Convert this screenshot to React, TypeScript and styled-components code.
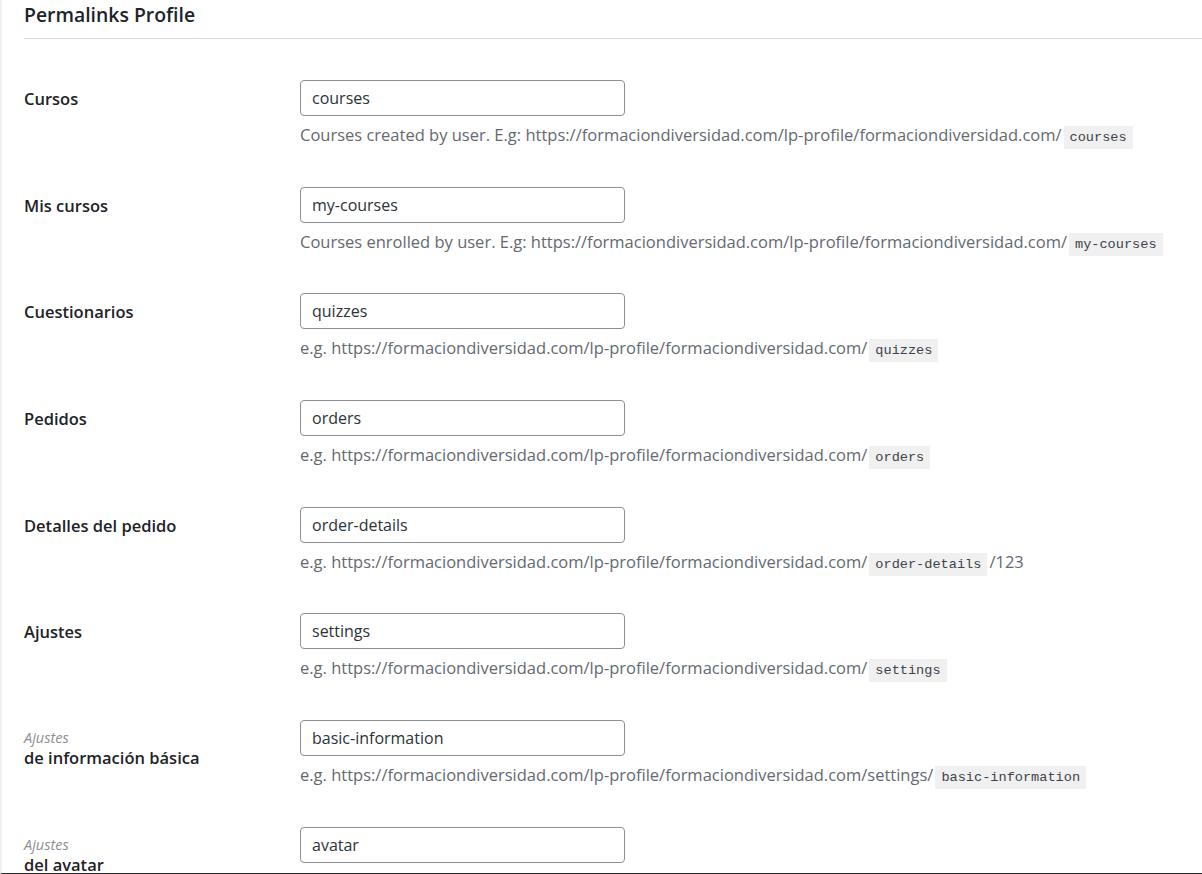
import React from "react";
import styled, { createGlobalStyle } from "styled-components";

const GlobalStyle = createGlobalStyle`
  html, body {
    margin: 0;
    padding: 0;
    background: #ffffff;
  }
  body {
    font-family: "Open Sans", "Noto Sans", Arial, sans-serif;
    color: #1d2327;
  }
`;

const Frame = styled.div`
  height: 874px;
  box-sizing: border-box;
  overflow: hidden;
  border-left: 2px solid #f0f0f1;
  border-bottom: 1px solid #2b2b2b;
  padding-left: 22px;
`;

const Title = styled.h2`
  margin: 0;
  padding: 2px 0 10px;
  font-size: 19.4px;
  line-height: 26px;
  font-weight: 600;
  color: #1d2327;
  border-bottom: 1px solid #dcdcde;
`;

const Rows = styled.div`
  padding-top: 21px;
`;

const Row = styled.div`
  display: grid;
  grid-template-columns: 276px 1fr;
  padding: 20px 0 20.7px;
`;

const Label = styled.div`
  padding-top: 8px;
  font-size: 16.5px;
  line-height: 22px;
  font-weight: 600;
  color: #1d2327;
`;

const LabelHint = styled.span`
  display: block;
  font-size: 14.5px;
  line-height: 19px;
  font-style: italic;
  font-weight: 400;
  color: #8c8f94;
`;

const Field = styled.div`
  display: flex;
  flex-direction: column;
  align-items: flex-start;
`;

const TextInput = styled.input`
  box-sizing: border-box;
  width: 325px;
  height: 36px;
  margin: 0;
  padding: 0 11px;
  border: 1px solid #8c8f94;
  border-radius: 4px;
  background: #ffffff;
  font-family: inherit;
  font-size: 16px;
  color: #2c3338;
  outline: none;
`;

const Description = styled.p`
  margin: 8px 0 0;
  height: 22px;
  font-size: 16.5px;
  line-height: 22px;
  color: #646970;
  white-space: nowrap;
`;

const Slug = styled.code`
  margin: 0 2px;
  padding: 4px 6px;
  background: #f0f0f1;
  font-family: "Liberation Mono", "DejaVu Sans Mono", monospace;
  font-size: 13.6px;
  line-height: 13px;
  color: #3c434a;
`;

type Permalink = {
  label: string;
  hint?: string;
  value: string;
  prefix: string;
  suffix?: string;
};

const SITE = "https://formaciondiversidad.com/lp-profile/formaciondiversidad.com/";

const permalinks: Permalink[] = [
  { label: "Cursos", value: "courses", prefix: `Courses created by user. E.g: ${SITE}` },
  { label: "Mis cursos", value: "my-courses", prefix: `Courses enrolled by user. E.g: ${SITE}` },
  { label: "Cuestionarios", value: "quizzes", prefix: `e.g. ${SITE}` },
  { label: "Pedidos", value: "orders", prefix: `e.g. ${SITE}` },
  { label: "Detalles del pedido", value: "order-details", prefix: `e.g. ${SITE}`, suffix: "/123" },
  { label: "Ajustes", value: "settings", prefix: `e.g. ${SITE}` },
  { label: "de información básica", hint: "Ajustes", value: "basic-information", prefix: `e.g. ${SITE}settings/` },
  { label: "del avatar", hint: "Ajustes", value: "avatar", prefix: `e.g. ${SITE}settings/` },
];

export default function App() {
  return (
    <>
      <GlobalStyle />
      <Frame>
        <Title>Permalinks Profile</Title>
        <Rows>
          {permalinks.map((p) => (
            <Row key={p.value}>
              <Label>
                {p.hint && <LabelHint>{p.hint}</LabelHint>}
                {p.label}
              </Label>
              <Field>
                <TextInput type="text" defaultValue={p.value} />
                <Description>
                  {p.prefix}
                  <Slug>{p.value}</Slug>
                  {p.suffix}
                </Description>
              </Field>
            </Row>
          ))}
        </Rows>
      </Frame>
    </>
  );
}
